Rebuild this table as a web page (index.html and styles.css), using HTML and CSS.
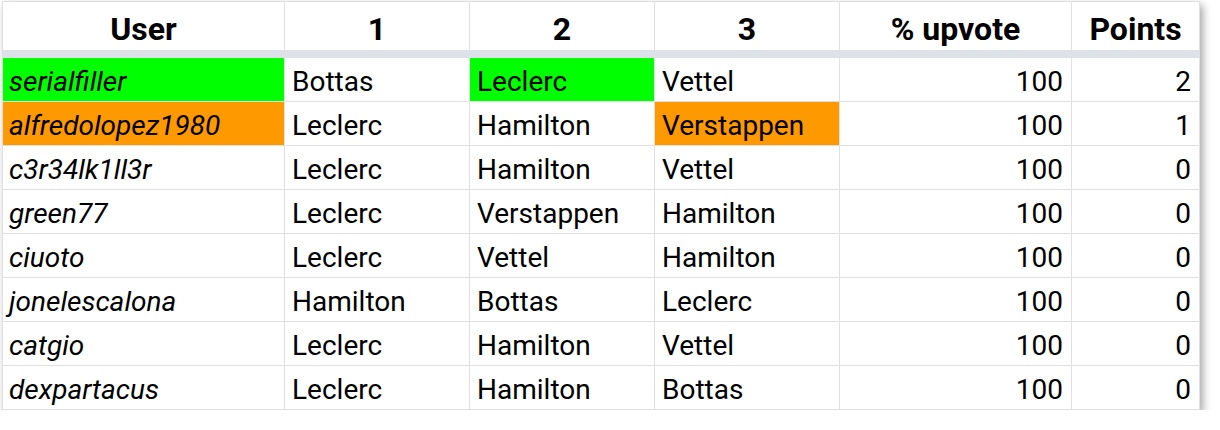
FILE: index.html
```html
<!DOCTYPE html>
<html>
<head>
<meta charset="utf-8">
<link rel="stylesheet" href="styles.css">
</head>
<body>
<div class="page">
<table class="sheet">
<colgroup>
<col class="c-user"><col class="c-pick"><col class="c-pick"><col class="c-pick"><col class="c-up"><col class="c-pts">
</colgroup>
<thead>
<tr><th>User</th><th>1</th><th>2</th><th>3</th><th>% upvote</th><th>Points</th></tr>
</thead>
<tbody>
<tr><td class="user green">serialfiller</td><td>Bottas</td><td class="green">Leclerc</td><td>Vettel</td><td class="num">100</td><td class="num">2</td></tr>
<tr><td class="user orange">alfredolopez1980</td><td>Leclerc</td><td>Hamilton</td><td class="orange">Verstappen</td><td class="num">100</td><td class="num">1</td></tr>
<tr><td class="user">c3r34lk1ll3r</td><td>Leclerc</td><td>Hamilton</td><td>Vettel</td><td class="num">100</td><td class="num">0</td></tr>
<tr><td class="user">green77</td><td>Leclerc</td><td>Verstappen</td><td>Hamilton</td><td class="num">100</td><td class="num">0</td></tr>
<tr><td class="user">ciuoto</td><td>Leclerc</td><td>Vettel</td><td>Hamilton</td><td class="num">100</td><td class="num">0</td></tr>
<tr><td class="user">jonelescalona</td><td>Hamilton</td><td>Bottas</td><td>Leclerc</td><td class="num">100</td><td class="num">0</td></tr>
<tr><td class="user">catgio</td><td>Leclerc</td><td>Hamilton</td><td>Vettel</td><td class="num">100</td><td class="num">0</td></tr>
<tr><td class="user">dexpartacus</td><td>Leclerc</td><td>Hamilton</td><td>Bottas</td><td class="num">100</td><td class="num">0</td></tr>
</tbody>
</table>
</div>
</body>
</html>
```
FILE: styles.css
```css
html, body {
  margin: 0;
  background: #ffffff;
}
.page {
  padding: 1px 0 0 2px;
}
.sheet {
  border-collapse: collapse;
  table-layout: fixed;
  width: 1197px;
  font-family: Roboto, "Liberation Sans", sans-serif;
  color: #000;
  box-shadow: 3px 4px 8px rgba(0, 0, 0, 0.35);
}
.c-user { width: 282px; }
.c-pick { width: 185px; }
.c-up { width: 232px; }
.c-pts { width: 128px; }
.sheet th, .sheet td {
  border: 1px solid #e0e0e0;
  padding: 0 7px;
  white-space: nowrap;
  overflow: hidden;
}
.sheet th {
  height: 42px;
  font-size: 32px;
  font-weight: 700;
  text-align: center;
  border-bottom: 8px solid #dde1e8;
  padding-top: 6px;
  line-height: 1;
}
.sheet td {
  height: 39px;
  font-size: 28px;
  line-height: 1;
  text-align: left;
  padding-top: 4px;
}
.sheet td.user {
  font-style: italic;
  padding-left: 6px;
}
.sheet td.num {
  text-align: right;
  padding-right: 8px;
}
.green { background: #00ff00; }
.orange { background: #ff9900; }
```
